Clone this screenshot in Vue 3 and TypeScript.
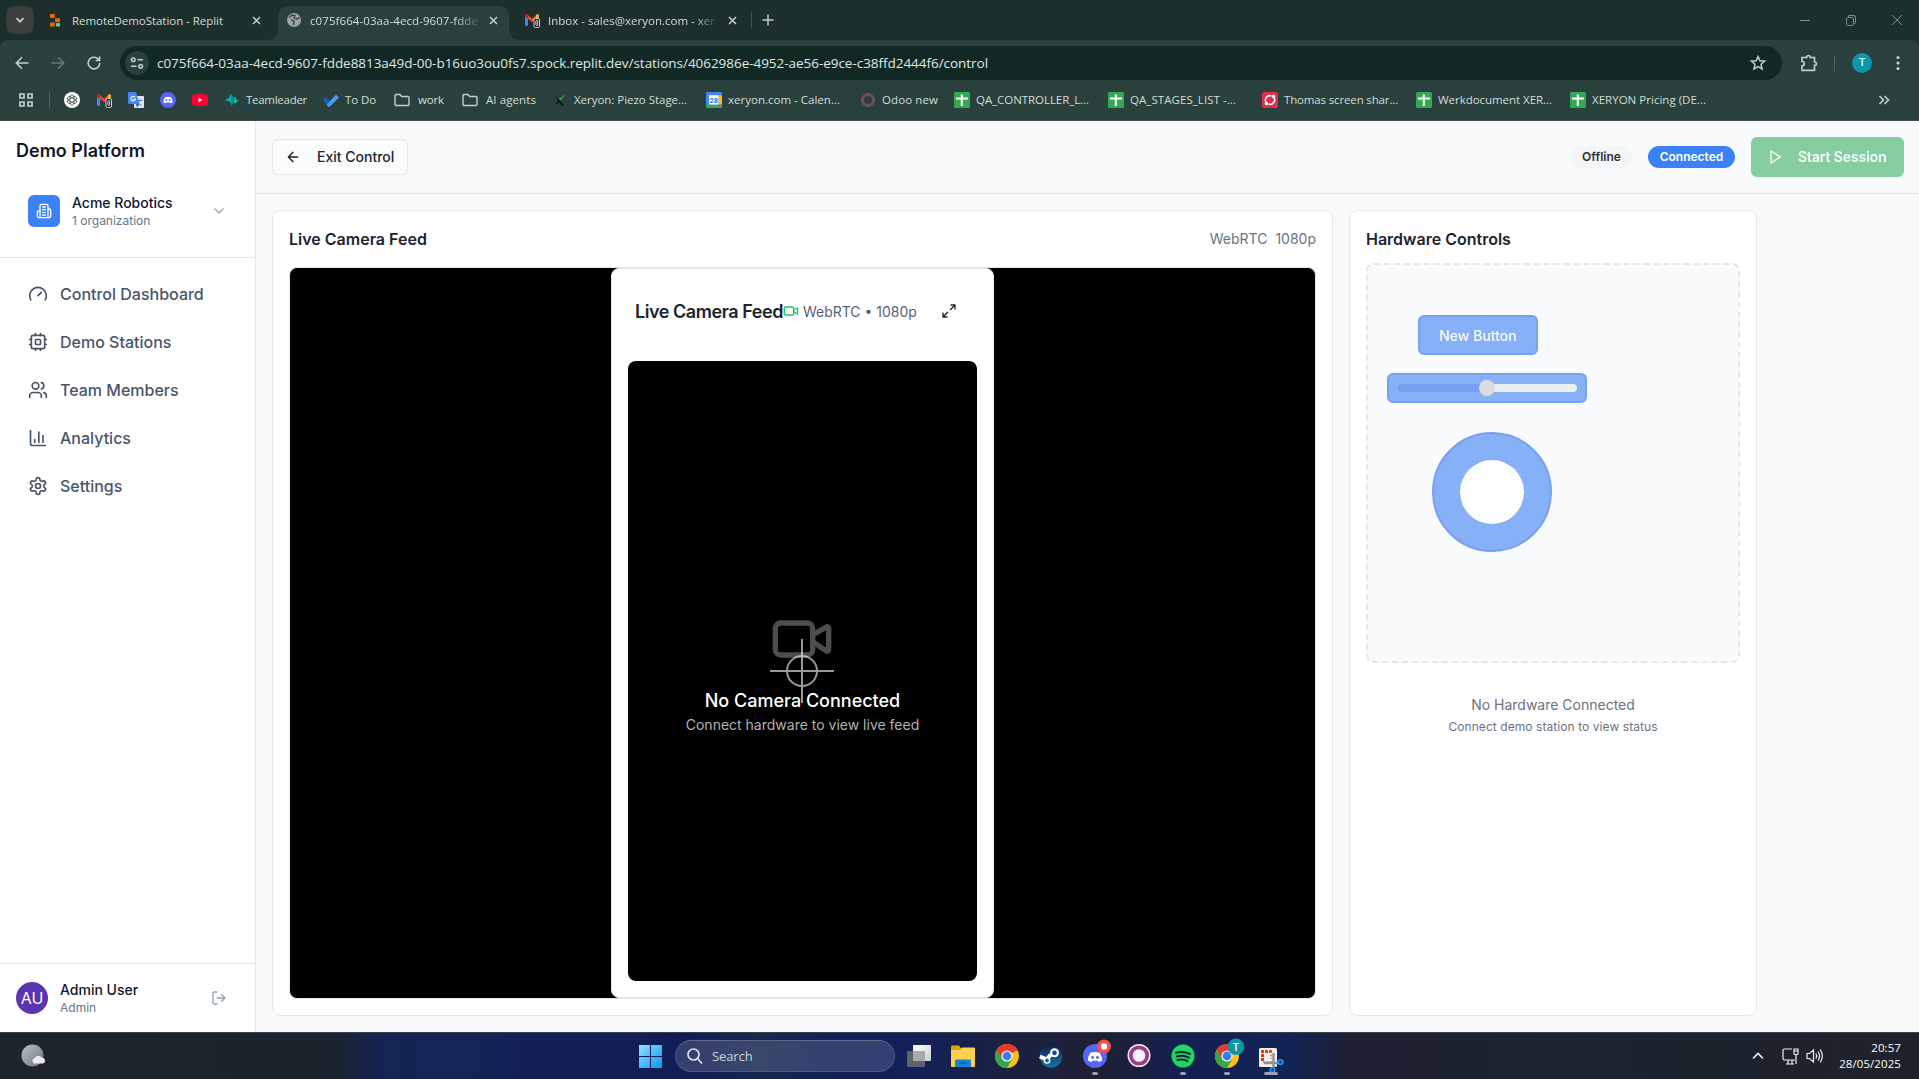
<script setup lang="ts">
interface Tab { title: string; icon: string; width: number; textWidth: number; active: boolean; fade: boolean }
interface Bookmark { icon: string; label: string; start: number; textStart: number; end: number }
interface TaskApp { icon: string; mark: '' | 'dot' | 'bar' }

const UI_FONT = '"Open Sans", "Noto Sans", sans-serif'
const ctx = document.createElement('canvas').getContext('2d')

// Letter spacing that makes a browser-chrome label occupy a given width.
function tracking(text: string, size: number, width: number) {
  if (!ctx) return {}
  ctx.font = `${size}px ${UI_FONT}`
  const gap = (width - ctx.measureText(text).width) / text.length
  return { letterSpacing: `${gap.toFixed(3)}px` }
}

const gmail = '<path d="M1 3v10.5h3V7l4 3 4-3v6.500h3V3l-1.500-1L8 6.500 2.500 2z" fill="#ea4335"/><path d="M1 4v9.500h3V6.500z" fill="#4285f4"/><path d="M1 3.500Q1.500 1.500 4 2.700V7L1 4.800z" fill="#c5221f"/><path d="M12 2.700Q14.500 1.500 15 3.500V5l-3 2z" fill="#fbbc04"/><path d="M12 6.500 15 5v5h-3z" fill="#34a853"/><rect x="10" y="6.500" width="5.500" height="9" rx="1.500" fill="#111" stroke="#fff" stroke-width=".8"/><rect x="11.900" y="8.500" width="1.800" height="5" rx=".8" fill="none" stroke="#fff" stroke-width=".9"/>'
const sheets = '<rect width="16" height="16" rx="1.500" fill="#34a853"/><path d="M7.800 2.500v11.500M2 6.500h12" stroke="#fff" stroke-width="2"/>'
const folder = '<path d="M1 3.500q0-1 1-1h4l1.700 2H14q1 0 1 1V12.500q0 1-1 1H2q-1 0-1-1z" fill="none" stroke="#c4cfca" stroke-width="1.400"/>'
const discordFace = '<path d="M5 5.200q3-1 6 0 1.700 2.500 1.600 5-1.200.9-2.400 1l-.6-1q-1.600.4-3.200 0l-.6 1q-1.200-.1-2.400-1-.1-2.500 1.600-5z" fill="#fff"/><circle cx="6.400" cy="8.300" r=".95" fill="#5865f2"/><circle cx="9.600" cy="8.300" r=".95" fill="#5865f2"/>'

const icons: Record<string, string> = {
  replit: '<rect x="2" y="2" width="4.800" height="4" rx=".6" fill="#f26207"/><rect x="7" y="6.200" width="5" height="4" rx=".6" fill="#f26207"/><rect x="2" y="10.500" width="4.800" height="4" rx=".6" fill="#f26207"/><rect x="8" y="11" width="4" height="3.500" rx="1" fill="#4ade80"/>',
  globe: '<circle cx="8" cy="8" r="7" fill="#9aa3a7"/><path d="M3 5.500 6 3l3 .5-1 2.500 3 1 2.500-1.500M5 8l3 1-.5 4" fill="none" stroke="#3a4b49" stroke-width="1.500"/>',
  gmail,
  gpt: '<circle cx="8" cy="8" r="8" fill="#fff"/><g fill="none" stroke="#333" stroke-width=".65"><rect x="6" y="3" width="4" height="10" rx="2"/><rect x="6" y="3" width="4" height="10" rx="2" transform="rotate(60 8 8)"/><rect x="6" y="3" width="4" height="10" rx="2" transform="rotate(120 8 8)"/></g>',
  translate: '<rect x="6" y="4" width="10" height="12" rx="1" fill="#dfe3e8"/><path d="M8.500 8.500h6M11.500 7v1.500q-.5 3-3 4.500M10 10.500q1 2 3.500 3" stroke="#607d8b" stroke-width=".9" fill="none"/><path d="M1 0h7l3.500 12H1q-1 0-1-1V1q0-1 1-1z" fill="#4285f4"/><path d="M7.200 5.300A2.300 2.300 0 1 0 7.500 7H5.300" stroke="#fff" stroke-width="1.100" fill="none"/><path d="M8 12h3.500L9 15.500z" fill="#1967d2"/>',
  discord: '<circle cx="8" cy="8" r="8" fill="#5865f2"/>' + discordFace,
  youtube: '<rect y="2.300" width="16" height="11.400" rx="3" fill="#ff0033"/><path d="M6.500 5.700v4.600l4-2.300z" fill="#fff"/>',
  teamleader: '<path d="M1 8.500 5 6l2-4 3 3.500 2-.5v2.500l3 1-3.500 3-2.500-1L7.500 14 6 9.500z" fill="#12b3a6"/><path d="m7 2 3 4v5L7.500 14z" fill="#0a8a86"/>',
  todo: '<path d="m0 8 3-3 4 4-2.500 4.500z" fill="#185abd"/><path d="M13 2.500 16 5.500 7 14.500q-1 .6-2 0L3.500 13z" fill="#3f9cf0"/>',
  folder,
  xeryon: '<path d="m2 3.500 4 4L14 2 8.500 8.500z" fill="#2fae3e"/><path d="m2 3 5 4.500 5 6h-2.500L7 10l-4.500 3.500L6 8.500z" fill="#0a100e"/>',
  calendar: '<rect width="16" height="16" rx="1.200" fill="#4285f4"/><path d="M12.500 3.500H16v9h-3.500z" fill="#fbbc04"/><path d="M0 12.500h12.500V16H1q-1 0-1-1z" fill="#34a853"/><path d="M12.500 12.500H16L12.500 16z" fill="#ea4335"/><path d="M3 3.200h9.500v9.300H3z" fill="#fff"/><text x="7.700" y="10.600" font-size="7.500" font-weight="700" font-family="Roboto" text-anchor="middle" fill="#1a73e8">28</text>',
  odoo: '<circle cx="8" cy="8" r="5.600" fill="none" stroke="#714b67" stroke-width="3"/>',
  sheets,
  screen: '<rect width="16" height="16" rx="2.500" fill="#e0304f"/><path d="M4 10.500a4.500 4.500 0 0 1 5.500-6.500M12 5.500a4.500 4.500 0 0 1-5.500 6.500" fill="none" stroke="#fff" stroke-width="1.500"/><circle cx="11.500" cy="4.500" r="1.700" fill="#fff"/><circle cx="4.500" cy="11.500" r="1.700" fill="#fff"/>',
}

const tabs: Tab[] = [
  { title: 'RemoteDemoStation - Replit', icon: 'replit', width: 238, textWidth: 151, active: false, fade: false },
  { title: 'c075f664-03aa-4ecd-9607-fdde', icon: 'globe', width: 231, textWidth: 168, active: true, fade: true },
  { title: 'Inbox - sales@xeryon.com - xer', icon: 'gmail', width: 242, textWidth: 167, active: false, fade: true },
]

const url = 'c075f664-03aa-4ecd-9607-fdde8813a49d-00-b16uo3ou0fs7.spock.replit.dev/stations/4062986e-4952-ae56-e9ce-c38ffd2444f6/control'

const bookmarks: Bookmark[] = [
  { icon: 'gpt', label: '', start: 64, textStart: 96, end: 96 },
  { icon: 'gmail', label: '', start: 96, textStart: 128, end: 128 },
  { icon: 'translate', label: '', start: 128, textStart: 160, end: 160 },
  { icon: 'discord', label: '', start: 160, textStart: 192, end: 192 },
  { icon: 'youtube', label: '', start: 192, textStart: 224, end: 224 },
  { icon: 'teamleader', label: 'Teamleader', start: 224, textStart: 246, end: 307 },
  { icon: 'todo', label: 'To Do', start: 323, textStart: 345, end: 376 },
  { icon: 'folder', label: 'work', start: 394, textStart: 418, end: 444 },
  { icon: 'folder', label: 'AI agents', start: 462, textStart: 486, end: 536 },
  { icon: 'xeryon', label: 'Xeryon: Piezo Stage...', start: 552, textStart: 574, end: 687 },
  { icon: 'calendar', label: 'xeryon.com - Calen...', start: 706, textStart: 728, end: 840 },
  { icon: 'odoo', label: 'Odoo new', start: 860, textStart: 882, end: 938 },
  { icon: 'sheets', label: 'QA_CONTROLLER_L...', start: 954, textStart: 976, end: 1089 },
  { icon: 'sheets', label: 'QA_STAGES_LIST -...', start: 1108, textStart: 1130, end: 1236 },
  { icon: 'screen', label: 'Thomas screen shar...', start: 1262, textStart: 1284, end: 1398 },
  { icon: 'sheets', label: 'Werkdocument XER...', start: 1416, textStart: 1438, end: 1552 },
  { icon: 'sheets', label: 'XERYON Pricing (DE...', start: 1570, textStart: 1592, end: 1706 },
]

function slotWidth(i: number) {
  const next = bookmarks[i + 1]
  return { width: `${(next ? next.start : 1720) - bookmarks[i].start}px` }
}

const nav = [
  { label: 'Control Dashboard', icon: '<path d="m12 14 4-4"/><path d="M3.340 19a10 10 0 1 1 17.320 0"/>' },
  { label: 'Demo Stations', icon: '<rect width="16" height="16" x="4" y="4" rx="2"/><rect width="6" height="6" x="9" y="9" rx="1"/><path d="M15 2v2M15 20v2M2 15h2M2 9h2M20 15h2M20 9h2M9 2v2M9 20v2"/>' },
  { label: 'Team Members', icon: '<path d="M16 21v-2a4 4 0 0 0-4-4H6a4 4 0 0 0-4 4v2"/><circle cx="9" cy="7" r="4"/><path d="M22 21v-2a4 4 0 0 0-3-3.870M16 3.130a4 4 0 0 1 0 7.750"/>' },
  { label: 'Analytics', icon: '<path d="M3 3v16a2 2 0 0 0 2 2h16M18 17V9M13 17V5M8 17v-3"/>' },
  { label: 'Settings', icon: '<path d="M12.220 2h-.44a2 2 0 0 0-2 2v.18a2 2 0 0 1-1 1.730l-.43.25a2 2 0 0 1-2 0l-.15-.08a2 2 0 0 0-2.730.73l-.22.38a2 2 0 0 0 .73 2.730l.15.1a2 2 0 0 1 1 1.720v.51a2 2 0 0 1-1 1.740l-.15.09a2 2 0 0 0-.73 2.730l.22.38a2 2 0 0 0 2.730.73l.15-.08a2 2 0 0 1 2 0l.43.25a2 2 0 0 1 1 1.730V20a2 2 0 0 0 2 2h.44a2 2 0 0 0 2-2v-.18a2 2 0 0 1 1-1.730l.43-.25a2 2 0 0 1 2 0l.15.08a2 2 0 0 0 2.730-.73l.22-.39a2 2 0 0 0-.73-2.730l-.15-.08a2 2 0 0 1-1-1.740v-.5a2 2 0 0 1 1-1.740l.15-.09a2 2 0 0 0 .73-2.730l-.22-.38a2 2 0 0 0-2.730-.73l-.15.08a2 2 0 0 1-2 0l-.43-.25a2 2 0 0 1-1-1.730V4a2 2 0 0 0-2-2z"/><circle cx="12" cy="12" r="3"/>' },
]

const chrome = '<circle cx="12" cy="12" r="12" fill="#fbc116"/><path d="M12 12 1.600 6A12 12 0 0 1 22.400 6z" fill="#e33b2e"/><path d="M1.600 6A12 12 0 0 0 12 24l5.200-9L12 12 6.800 15z" fill="#2da94f"/><path d="M12 6.500h10.700A12 12 0 0 0 1.600 6l5.200 9z" fill="#e33b2e"/><circle cx="12" cy="12" r="5.600" fill="#fff"/><circle cx="12" cy="12" r="4.400" fill="#3b7ded"/>'
const apps: TaskApp[] = [
  { mark: '', icon: '<defs><linearGradient id="tv" x1="0" y1="0" x2="1" y2="1"><stop offset="0" stop-color="#fff"/><stop offset="1" stop-color="#cfcfd2"/></linearGradient></defs><rect x="0" y="7" width="18" height="16" rx="1" fill="#62636a"/><rect x="6" y="1" width="18" height="16" rx="1" fill="url(#tv)"/><path d="M6 7h12v10H6z" fill="#a9aaae"/>' },
  { mark: '', icon: '<path d="M0 2.500q0-1 1-1h7l2.500 3.500v4H0z" fill="#dfa007"/><path d="M0 6h9l2-2.500h12q1 0 1 1V22q0 1-1 1H1q-1 0-1-1z" fill="#ffd04f"/><path d="M4 23v-6q0-1.500 1.500-1.500h13q1.500 0 1.500 1.500v6z" fill="#1683d4"/><path d="M8 19h8" stroke="#0a63ac" stroke-width="1.500"/>' },
  { mark: '', icon: chrome },
  { mark: '', icon: '<defs><linearGradient id="st" x1="0" y1="0" x2="0" y2="1"><stop offset="0" stop-color="#111d4a"/><stop offset="1" stop-color="#1178aa"/></linearGradient></defs><circle cx="12" cy="12" r="11.500" fill="url(#st)"/><path d="m.8 12.500 7 3 4-5" stroke="#fff" stroke-width="4" fill="none"/><circle cx="8" cy="16.500" r="3.300" fill="#fff"/><circle cx="15.500" cy="8.800" r="4.500" fill="#fff"/><circle cx="15.500" cy="8.800" r="2.800" fill="#15457d" stroke="#fff" stroke-width="1"/><circle cx="8" cy="16.500" r="1.900" fill="#1a5f92"/>' },
  { mark: 'dot', icon: '<circle cx="12" cy="12" r="12" fill="#5865f2"/><g transform="translate(-.4 .6) scale(1.550)">' + discordFace + '</g><circle cx="21" cy="2.500" r="7" fill="#f0514f"/><rect x="18" y="-.5" width="6" height="6" rx="2" fill="#fff"/>' },
  { mark: '', icon: '<circle cx="12" cy="11.500" r="11.500" fill="#f4f1f4"/><circle cx="12" cy="11.500" r="8.200" fill="#f7f4f7" stroke="#963f82" stroke-width="3.800"/>' },
  { mark: 'dot', icon: '<circle cx="12" cy="12" r="11.500" fill="#1ed760"/><path d="M5 8.700q7.500-2 14 1.300M5.800 12.500q6.500-1.700 12 1.200M6.500 16q5.500-1.400 10 1.100" fill="none" stroke="#10233a" stroke-width="2" stroke-linecap="round"/>' },
  { mark: 'dot', icon: chrome + '<circle cx="21" cy="2.800" r="8.300" fill="#0d96a5"/><text x="21" y="6.600" font-size="10.500" font-weight="500" font-family="Roboto" text-anchor="middle" fill="#e6ffff">T</text>' },
  { mark: 'bar', icon: '<rect x="0" y="4" width="18" height="19" rx="1.500" fill="#f1f1f2"/><path d="M13 7.500H3.500V17" fill="none" stroke="#d7400f" stroke-width="3" stroke-dasharray="3 1"/><path d="M4 18h9M12 7v8" stroke="#e07040" stroke-width="1.500" stroke-dasharray="2 1.500" fill="none"/><path d="M14.500 9v14M5 19h16" stroke="#8f9299" stroke-width="2.500"/><circle cx="21.500" cy="18" r="2.300" fill="#0f3e75" stroke="#1f9bef" stroke-width="1.600"/><circle cx="13.500" cy="26" r="2.300" fill="#0f3e75" stroke="#1f9bef" stroke-width="1.600"/>' },
]
</script>

<template>
  <div class="desktop">
    <header class="browser">
      <div class="tabstrip">
        <div class="tab-search"><svg width="10" height="10" viewBox="0 0 10 10"><path d="m1.500 3.200 3.500 3.500 3.500-3.500" class="line" stroke-width="1.800" /></svg></div>
        <div v-for="t in tabs" :key="t.title" class="tab" :class="[t.icon, { active: t.active }]" :style="{ width: t.width + 'px' }">
          <svg class="fav" viewBox="0 0 16 16" v-html="icons[t.icon]" />
          <span class="tab-title" :class="{ fade: t.fade }"><span :style="tracking(t.title, 11.5, t.textWidth)">{{ t.title }}</span></span>
          <svg class="close" width="9" height="9" viewBox="0 0 9 9"><path d="m1 1 7 7M8 1 1 8" class="line" stroke-width="1.500" /></svg>
        </div>
        <i class="tab-sep" />
        <svg class="plus" width="12" height="12" viewBox="0 0 12 12"><path d="M6 .500v11M.500 6h11" class="line" stroke-width="1.500" /></svg>
        <div class="win">
          <svg width="12" height="12" viewBox="0 0 12 12"><path d="M1 5.500h10" /></svg>
          <svg width="12" height="12" viewBox="0 0 12 12"><rect x="1.500" y="2.500" width="7" height="8" rx="1" /><path d="M3.500 2V.5h5.500q1.500 0 1.500 1.500V7.500q0 1-1 1" /></svg>
          <svg width="12" height="12" viewBox="0 0 12 12"><path d="m1 0 10 10M11 0 1 10" /></svg>
        </div>
      </div>

      <div class="toolbar">
        <div class="nav-buttons">
          <svg width="16" height="16" viewBox="0 0 16 16"><path d="M14.500 8H2.500M8 2.300 2.300 8 8 13.700" class="line" stroke-width="1.600" /></svg>
          <svg class="dim" width="16" height="16" viewBox="0 0 16 16"><path d="M1.500 8h12M8 2.300 13.700 8 8 13.700" class="line" stroke-width="1.600" /></svg>
          <svg width="16" height="16" viewBox="0 0 16 16"><path d="M13.800 8A5.800 5.800 0 1 1 12 3.800L13.500 5.300M13.600 1.500v4h-4" class="line" stroke-width="1.600" /></svg>
        </div>
        <div class="omnibox">
          <span class="tune"><svg width="14" height="14" viewBox="0 0 14 14"><g class="line" stroke-width="1.500"><circle cx="3.300" cy="3.800" r="1.800" /><path d="M7.500 3.800H13M1 10.200h5.500" /><circle cx="10.700" cy="10.200" r="1.800" /></g></svg></span>
          <span class="url" :style="tracking(url, 13.5, 831)">{{ url }}</span>
          <svg class="star" width="16" height="16" viewBox="0 0 16 16"><path d="m8 1.500 1.900 4.300 4.700.4L11 9.300l1.100 4.600L8 11.500l-4.100 2.400L5 9.300 1.400 6.200l4.700-.4z" class="line" stroke-width="1.500" /></svg>
        </div>
        <svg class="ext" width="18" height="18" viewBox="0 0 18 18"><path d="M2 3.500h4.800q0-2 1.700-2t1.700 2H14.500V8q2 0 2 1.700t-2 1.700v5H2v-4.500q2.300 0 2.300-2.200T2 7.500z" class="line" stroke-width="1.600" /></svg>
        <i class="bar-sep" />
        <span class="profile">T</span>
        <svg class="kebab" width="4" height="16" viewBox="0 0 4 16"><circle cx="2" cy="2.500" r="1.600" /><circle cx="2" cy="8" r="1.600" /><circle cx="2" cy="13.500" r="1.600" /></svg>
      </div>

      <div class="bookmarks">
        <svg class="apps" width="14" height="14" viewBox="0 0 14 14"><path d="M1 1h4v4H1zM9 1h4v4H9zM1 9h4v4H1zM9 9h4v4H9z" class="line" stroke-width="1.700" /></svg>
        <i class="bm-sep" />
        <div v-for="(b, i) in bookmarks" :key="i" class="bookmark" :style="slotWidth(i)">
          <svg class="fav" viewBox="0 0 16 16" v-html="icons[b.icon]" />
          <span v-if="b.label" class="bm-label" :class="{ wide: b.icon === 'folder' }" :style="tracking(b.label, 11.5, b.end - b.textStart)">{{ b.label }}</span>
        </div>
        <svg class="more" width="12" height="10" viewBox="0 0 12 10"><path d="m1.500 1 4 4-4 4M6.500 1l4 4-4 4" class="line" stroke-width="1.600" /></svg>
      </div>
    </header>

    <div class="app">
      <aside class="sidebar">
        <div class="brand">
          <h1>Demo Platform</h1>
          <div class="org">
            <span class="org-icon">
              <svg class="lucide" width="16" height="16" viewBox="0 0 24 24"><path d="M6 22V4a2 2 0 0 1 2-2h8a2 2 0 0 1 2 2v18Z" /><path d="M6 12H4a2 2 0 0 0-2 2v6a2 2 0 0 0 2 2h2M18 9h2a2 2 0 0 1 2 2v9a2 2 0 0 1-2 2h-2M10 6h4M10 10h4M10 14h4M10 18h4" /></svg>
            </span>
            <div class="who"><b>Acme Robotics</b><small>1 organization</small></div>
            <svg class="lucide muted" width="16" height="16" viewBox="0 0 24 24"><path d="m6 9 6 6 6-6" /></svg>
          </div>
        </div>
        <nav>
          <a v-for="n in nav" :key="n.label"><svg class="lucide" width="20" height="20" viewBox="0 0 24 24" v-html="n.icon" />{{ n.label }}</a>
        </nav>
        <div class="user">
          <span class="avatar">AU</span>
          <div class="who"><b>Admin User</b><small>Admin</small></div>
          <svg class="lucide muted" width="16" height="16" viewBox="0 0 24 24"><path d="M9 21H5a2 2 0 0 1-2-2V5a2 2 0 0 1 2-2h4M16 17l5-5-5-5M21 12H9" /></svg>
        </div>
      </aside>

      <main>
        <div class="topbar">
          <button class="exit"><svg class="lucide" width="16" height="16" viewBox="0 0 24 24"><path d="m12 19-7-7 7-7M19 12H5" /></svg><span>Exit Control</span></button>
          <div class="status">
            <span class="badge offline">Offline</span>
            <span class="badge connected">Connected</span>
            <button class="start"><svg class="lucide" width="16" height="16" viewBox="0 0 24 24"><path d="m6 3 14 9-14 9z" /></svg><span>Start Session</span></button>
          </div>
        </div>

        <div class="panels">
          <section class="card camera">
            <div class="card-head"><h2>Live Camera Feed</h2><p><span>WebRTC</span><span>1080p</span></p></div>
            <div class="stage">
              <div class="feed">
                <div class="feed-head">
                  <h3>Live Camera Feed</h3>
                  <svg class="lucide green" width="16" height="16" viewBox="0 0 24 24"><path d="m16 13 5.223 3.482a.5.5 0 0 0 .777-.416V7.870a.5.5 0 0 0-.752-.432L16 10.500" /><rect x="2" y="6" width="14" height="12" rx="2" /></svg>
                  <span>WebRTC • 1080p</span>
                  <svg class="lucide expand" width="16" height="16" viewBox="0 0 24 24"><path d="M15 3h6v6M9 21H3v-6M21 3l-7 7M3 21l7-7" /></svg>
                </div>
                <div class="screen">
                  <div class="empty">
                    <svg class="lucide" width="64" height="64" viewBox="0 0 24 24"><path d="m16 13 5.223 3.482a.5.5 0 0 0 .777-.416V7.870a.5.5 0 0 0-.752-.432L16 10.500" /><rect x="2" y="6" width="14" height="12" rx="2" /></svg>
                    <strong>No Camera Connected</strong>
                    <span>Connect hardware to view live feed</span>
                  </div>
                  <div class="crosshair"><i class="h" /><i class="v" /><i class="ring" /></div>
                </div>
              </div>
            </div>
          </section>

          <section class="card hardware">
            <h2>Hardware Controls</h2>
            <div class="canvas">
              <div class="widget push">New Button</div>
              <div class="widget slider"><div class="track"><i class="fill" /><i class="thumb" /></div></div>
              <div class="widget dial"><i /></div>
            </div>
            <div class="none"><span>No Hardware Connected</span><small>Connect demo station to view status</small></div>
          </section>
        </div>
      </main>
    </div>

    <footer class="taskbar">
      <div class="weather">
        <svg width="24" height="24" viewBox="0 0 24 24"><defs><linearGradient id="moon" x1="0" y1="0" x2="1" y2="1"><stop offset="0" stop-color="#bcc2c9" /><stop offset="1" stop-color="#69727c" /></linearGradient></defs><circle cx="11.500" cy="11.500" r="11" fill="url(#moon)" /><path d="M13 19.500a3 3 0 0 1 .5-5.500 4 4 0 0 1 7-.5q3.500.5 3.500 3.200 0 2.800-3 2.800z" fill="#e8ebee" /></svg>
      </div>
      <div class="dock">
        <svg class="start-logo" width="23" height="23" viewBox="0 0 23 23"><defs><linearGradient id="win" x1="0" y1="0" x2="1" y2="1"><stop offset="0" stop-color="#8fe3fd" /><stop offset="1" stop-color="#0a93f5" /></linearGradient></defs><path d="M0 0h11v11H0zM12 0h11v11H12zM0 12h11v11H0zM12 12h11v11H12z" fill="url(#win)" /></svg>
        <div class="search"><svg width="16" height="16" viewBox="0 0 16 16"><circle cx="6.500" cy="6.500" r="5.500" /><path d="m10.500 10.500 4 4.500" /></svg><span>Search</span></div>
        <div v-for="(a, i) in apps" :key="i" class="task"><svg width="24" height="24" viewBox="0 0 24 24" v-html="a.icon" /><i v-if="a.mark" :class="a.mark" /></div>
      </div>
      <div class="tray">
        <svg width="12" height="8" viewBox="0 0 12 8"><path d="m1 6.500 5-5 5 5" stroke-width="1.600" /></svg>
        <svg width="17" height="17" viewBox="0 0 17 17"><path d="M10 1H2.500Q1 1 1 2.500v8Q1 12 2.500 12H13M4 16h8M6 12.500V16M10 12.500V16M14 7v9M12 1h4v4.500q0 1-1 1h-2q-1 0-1-1zM12 3h4" stroke-width="1.200" /></svg>
        <svg class="speaker" width="18" height="16" viewBox="0 0 18 16"><path d="M1 5.500h2.500L7.500 2v12L3.500 10.500H1zM9.800 5.500q1.700 2.500 0 5M12 3.500q3 4.500 0 9M14.300 1.500q4 6.500 0 13" stroke-width="1.200" /></svg>
        <div class="clock"><span>20:57</span><span>28/05/2025</span></div>
      </div>
    </footer>
  </div>
</template>

<style>
body { margin: 0; overflow: hidden; }
</style>

<style scoped>
* { box-sizing: border-box; }
h1, h2, h3, p { margin: 0; }
svg { display: block; flex: none; overflow: visible; }
i { display: block; flex: none; }
.desktop { width: 1919px; height: 1079px; display: flex; flex-direction: column; overflow: hidden; font-family: Inter, sans-serif; color: #1c2430; }

.browser { height: 121px; flex: none; background: #1c2f2d; border-bottom: 1px solid #444b4a; font-family: "Open Sans", "Noto Sans", sans-serif; font-size: 11.5px; color: #d3ddd9; }
.line { fill: none; stroke: #c4cfca; }
.tabstrip { height: 40px; display: flex; align-items: flex-start; padding-left: 6px; }
.tab-search { width: 28px; height: 28px; margin: 6px 6px 0 0; border-radius: 9px; background: #3b3e3c; display: flex; align-items: center; justify-content: center; }
.tab { height: 34px; margin-top: 6px; padding: 0 11px 6px 8px; display: flex; align-items: center; position: relative; white-space: nowrap; }
.tab.replit { padding-right: 17px; }
.tab.gmail { padding-left: 15px; padding-right: 14px; }
.tab.active { background: #29403c; border-radius: 10px 10px 0 0; }
.tab.active::before, .tab.active::after { content: ""; position: absolute; bottom: 0; width: 10px; height: 10px; }
.tab.active::before { left: -10px; background: radial-gradient(circle at 0 0, transparent 9.500px, #29403c 10px); }
.tab.active::after { right: -10px; background: radial-gradient(circle at 100% 0, transparent 9.500px, #29403c 10px); }
.fav { width: 16px; height: 16px; }
.tab-title { flex: 1; margin: 0 10px 0 8px; }
.tab-title.fade { -webkit-mask-image: linear-gradient(90deg, #000 86%, rgba(0, 0, 0, .1) 100%); mask-image: linear-gradient(90deg, #000 86%, rgba(0, 0, 0, .1) 100%); }
.tab-sep { width: 1px; height: 16px; margin-top: 12px; background: #40504d; }
.plus { margin: 14px 0 0 10px; }
.win { margin: 15px 16px 0 auto; display: flex; gap: 34px; }
.win svg { fill: none; stroke: #7f8c89; stroke-width: 1; }

.toolbar { height: 42px; display: flex; align-items: flex-start; background: #29403c; border-radius: 8px 8px 0 0; padding: 6px 19px 0 14px; }
.nav-buttons { width: 106px; flex: none; display: flex; gap: 20px; height: 34px; align-items: center; }
.dim { opacity: .4; }
.omnibox { width: 1662px; flex: none; height: 34px; border-radius: 17px; background: #112825; display: flex; align-items: center; padding: 0 16px 0 5px; }
.tune { width: 24px; height: 24px; border-radius: 12px; background: #29403c; display: flex; align-items: center; justify-content: center; }
.url { margin-left: 8px; font-size: 13.5px; color: #dfe8e5; white-space: nowrap; }
.star { margin-left: auto; }
.ext { margin: 8px 0 0 18px; }
.bar-sep { width: 1px; height: 16px; margin: 9px 0 0 16px; background: #4c635f; }
.profile { width: 20px; height: 20px; flex: none; margin: 7px 0 0 17px; border-radius: 50%; background: #0a98a8; color: #d8fbff; font: 500 11px/20px Roboto, sans-serif; text-align: center; }
.kebab { margin: 9px 0 0 auto; fill: #c4cfca; }

.bookmarks { height: 38px; display: flex; align-items: center; background: #29403c; padding: 0 29px 2px 19px; }
.bm-sep { width: 1px; height: 16px; margin: 0 14px 0 16px; background: #4c635f; }
.bookmark { display: flex; align-items: center; white-space: nowrap; flex: none; }
.bm-label { margin: -2px 0 0 6px; }
.bm-label.wide { margin-left: 8px; }
.more { margin-left: auto; }

.app { height: 911px; flex: none; display: flex; background: #f9fafc; }
.lucide { fill: none; stroke: currentColor; stroke-width: 2; stroke-linecap: round; stroke-linejoin: round; }
.sidebar { width: 256px; background: #fff; border-right: 1px solid #e2e8f0; display: flex; flex-direction: column; }
.brand { height: 137px; border-bottom: 1px solid #e2e8f0; padding: 16px; }
h1 { font-size: 18px; font-weight: 600; line-height: 28px; color: #0f172a; }
.org { margin-top: 18px; padding: 0 12px; height: 56px; display: flex; align-items: center; }
.org-icon { width: 32px; height: 32px; border-radius: 6px; background: #3b82f6; color: #fff; display: flex; align-items: center; justify-content: center; }
.who { flex: 1; margin-left: 12px; display: flex; flex-direction: column; }
.who b { font-size: 14px; line-height: 20px; font-weight: 500; color: #0f172a; }
.who small { font-size: 12px; line-height: 16px; color: #64748b; }
.muted { color: #94a3b8; }
nav { flex: 1; padding: 16px 0 0; }
nav a { height: 40px; margin-bottom: 8px; padding-left: 28px; display: flex; align-items: center; gap: 12px; font-size: 16px; font-weight: 500; color: #475569; }
.user { height: 69px; border-top: 1px solid #e2e8f0; padding: 0 28px 0 16px; display: flex; align-items: center; }
.avatar { width: 32px; height: 32px; border-radius: 50%; background: #5b34b0; color: #fff; font-size: 16px; line-height: 32px; text-align: center; }

main { flex: 1; display: flex; flex-direction: column; }
.topbar { height: 73px; padding: 0 15px 0 16px; border-bottom: 1px solid #e5e7eb; display: flex; align-items: center; justify-content: space-between; }
button { font-family: inherit; font-size: 14px; font-weight: 500; display: flex; align-items: center; padding: 0; }
button span { margin-top: -1px; }
.exit { width: 136px; height: 36px; padding-left: 12px; gap: 16px; border: 1px solid #e5e7eb; border-radius: 6px; background: #fafbfb; color: #20242c; }
.status { display: flex; align-items: center; gap: 16px; }
.badge { height: 22px; border-radius: 11px; font-size: 12px; font-weight: 600; line-height: 22px; text-align: center; }
.offline { width: 61px; background: #f4f5f5; color: #2b303b; }
.connected { width: 87px; background: #3b82f6; color: #fff; }
.start { width: 153px; height: 40px; padding-left: 16px; gap: 15px; border: 0; border-radius: 6px; background: #16a34a; color: #fff; opacity: .5; font-weight: 600; letter-spacing: -.1px; }

.panels { flex: 1; padding: 16px; display: flex; gap: 16px; }
.card { height: 806px; background: #fff; border: 1px solid #e5e7eb; border-radius: 8px; padding: 16px; }
.camera { width: 1061px; }
.hardware { width: 408px; }
h2 { font-size: 16px; font-weight: 600; line-height: 24px; color: #1c2430; }
.card-head { display: flex; justify-content: space-between; align-items: center; }
.card-head p { display: flex; gap: 8px; margin-top: -1px; font-size: 14px; line-height: 20px; color: #6b7280; }
.stage { margin-top: 16px; height: 732px; border: 1px solid #e2e6ea; border-radius: 8px; background: #000; overflow: hidden; display: flex; justify-content: center; }
.feed { width: 383px; height: 730px; background: #fff; border: 1px solid #e2e6ea; border-radius: 8px; padding: 0 16px 16px; }
.feed-head { height: 92px; padding: 0 20px 8px 7px; display: flex; align-items: center; font-size: 14px; color: #566274; }
h3 { font-size: 18px; font-weight: 600; letter-spacing: -.45px; color: #1c2430; }
.green { color: #22c55e; }
.feed-head span { margin-left: 4px; white-space: nowrap; }
.expand { margin-left: auto; color: #1c2430; }
.screen { height: 620px; border-radius: 8px; background: #000; position: relative; display: flex; align-items: center; justify-content: center; }
.empty { display: flex; flex-direction: column; align-items: center; color: #fff; }
.empty svg { color: #4d4d4d; margin: 0 1px 16px 0; }
.empty strong { font-size: 18px; line-height: 28px; font-weight: 500; }
.empty span { font-size: 14px; line-height: 20px; color: #b3b3b3; }
.crosshair { position: absolute; left: 0; right: 1px; top: 278px; margin: auto; width: 64px; height: 64px; opacity: .6; }
.crosshair i { position: absolute; }
.crosshair .h { left: 0; right: 0; top: 31px; height: 2px; background: #fff; }
.crosshair .v { top: 0; bottom: 0; left: 31px; width: 2px; background: #fff; }
.crosshair .ring { inset: 16px; border: 2px solid #fff; border-radius: 50%; }

.canvas { position: relative; height: 400px; margin-top: 12px; border: 2px dashed #e5e7eb; border-radius: 8px; background: #f9fafb; }
.widget { position: absolute; opacity: .6; background: #3b82f6; border: 2px solid #2563eb; border-radius: 6px; }
.push { left: 50px; top: 50px; width: 120px; height: 40px; color: #fff; font-size: 14px; font-weight: 500; line-height: 38px; text-align: center; }
.slider { left: 19px; top: 108px; width: 200px; height: 30px; padding: 9px 8px; }
.track { height: 8px; border-radius: 4px; background: #e5e7eb; position: relative; }
.fill { width: 50%; height: 8px; border-radius: 4px; background: #2563eb; }
.thumb { position: absolute; left: 82px; top: -4px; width: 16px; height: 16px; border-radius: 50%; background: #cbcbcb; }
.dial { left: 64px; top: 167px; width: 120px; height: 120px; border-radius: 50%; display: flex; align-items: center; justify-content: center; }
.dial i { width: 64px; height: 64px; border-radius: 50%; background: #fff; }
.none { margin-top: 32px; display: flex; flex-direction: column; align-items: center; color: #6b7280; }
.none span { font-size: 14px; line-height: 20px; }
.none small { font-size: 12px; line-height: 16px; margin-top: 4px; letter-spacing: .07px; }

.taskbar { flex: 1; display: flex; border-top: 1px solid #3b4250; background: linear-gradient(90deg, #1e242c 0, #1c232d 330px, #142453 385px, #132655 460px, #121f58 530px, #121d55 690px, #15294e 760px, #121e57 850px, #13205a 920px, #1b2042 1000px, #1e2133 1100px, #141f50 1180px, #112455 1290px, #1e2032 1350px, #1d2130 1430px, #1b2430 1500px, #1e222b 1919px); font-family: "Open Sans", "Noto Sans", sans-serif; }
.weather { width: 639px; padding: 11px 0 0 21px; }
.dock { display: flex; }
.start-logo { margin: 12px 13px 0 0; }
.search { width: 220px; height: 32px; margin: 7px 12px 0 0; border-radius: 16px; border: 1px solid #4e5780; border-top-color: #5d6688; background: rgba(120, 125, 160, .35); display: flex; align-items: center; padding-left: 11px; gap: 9px; font-size: 13px; letter-spacing: -.1px; color: #cdd1dd; }
.search svg { fill: none; stroke: #dfe1ea; stroke-width: 1.700; stroke-linecap: round; }
.task { width: 44px; padding-top: 11px; display: flex; flex-direction: column; }
.task i { height: 3px; border-radius: 2px; background: #9da1ad; margin-top: 4px; }
.dot { width: 6px; margin-left: 9px; }
.bar { width: 14px; margin-left: 5px; }
.tray { margin-left: auto; padding-right: 18px; display: flex; align-items: center; color: #fff; }
.tray svg { fill: none; stroke: #f0f1f3; margin-right: 18px; }
.tray svg:nth-child(2) { margin-right: 7px; }
.tray .speaker { margin-right: 15px; }
.clock { width: 62px; display: flex; flex-direction: column; text-align: right; font-size: 11.5px; line-height: 16px; letter-spacing: .08px; }
</style>
